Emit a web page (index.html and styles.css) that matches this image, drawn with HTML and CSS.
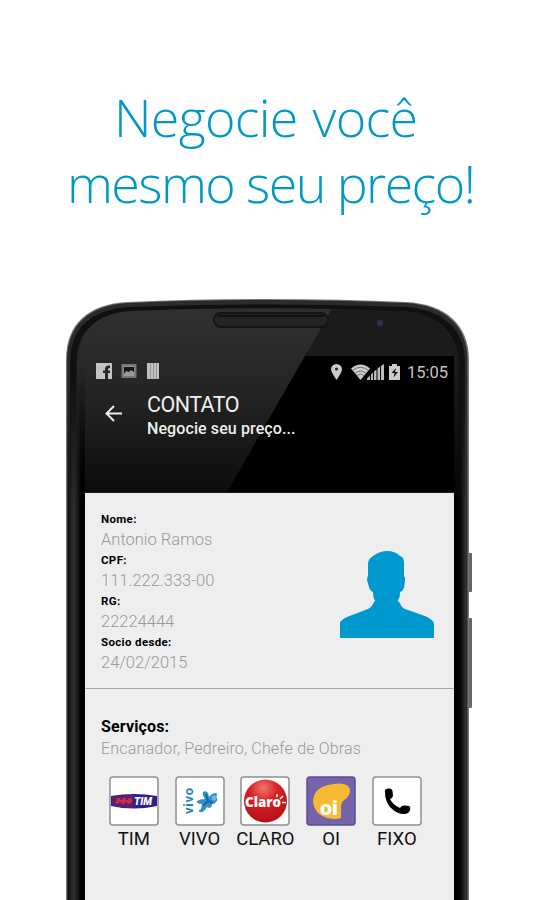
FILE: index.html
```
<!DOCTYPE html>
<html lang="pt-br">
<head>
    <meta charset="UTF-8">
    <meta name="viewport" content="width=device-width, initial-scale=1.0">
    <title>Contato</title>
    <link rel="stylesheet" href="styles.css">
</head>
<body>
    <!-- Chamada principal -->
    <h1 class="headline">
        <span class="line-one">Negocie você</span>
        <span class="line-two">mesmo seu preço!</span>
    </h1>

    <!-- Aparelho -->
    <div class="phone">
        <svg class="phone-frame" width="412" height="604" viewBox="0 0 412 604">
            <defs>
                <linearGradient id="glass" x1="0" y1="0" x2="0" y2="1">
                    <stop offset="0" stop-color="#303030"/>
                    <stop offset="0.5" stop-color="#232323"/>
                    <stop offset="1" stop-color="#0c0c0c"/>
                </linearGradient>
                <linearGradient id="edge" x1="0" y1="0" x2="1" y2="0">
                    <stop offset="0" stop-color="#101010"/>
                    <stop offset="0.35" stop-color="#303030"/>
                    <stop offset="0.6" stop-color="#151515"/>
                    <stop offset="0.75" stop-color="#000"/>
                    <stop offset="1" stop-color="#000"/>
                </linearGradient>
                <linearGradient id="edge-right" x1="0" y1="0" x2="1" y2="0">
                    <stop offset="0" stop-color="#000"/>
                    <stop offset="0.5" stop-color="#050505"/>
                    <stop offset="0.8" stop-color="#222"/>
                    <stop offset="1" stop-color="#333"/>
                </linearGradient>
                <linearGradient id="fade" x1="0" y1="70" x2="0" y2="210" gradientUnits="userSpaceOnUse">
                    <stop offset="0" stop-color="#000"/>
                    <stop offset="1" stop-color="#fff"/>
                </linearGradient>
                <mask id="fade-mask" maskUnits="userSpaceOnUse" x="0" y="0" width="412" height="604">
                    <rect width="412" height="604" fill="url(#fade)"/>
                </mask>
            </defs>
            <rect x="400" y="255" width="6" height="39" rx="1" fill="#666"/>
            <rect x="400" y="320" width="6" height="90" rx="1" fill="#666"/>
            <path d="M0 620V62C0 26 22 6 62 4Q130 1 202 1Q275 1 340 4C380 6 403 27 403 62V620Z" fill="#777"/>
            <path d="M1 620V62C1 27 23 7 62 5Q130 2 202 2Q275 2 340 5C379 7 401.500 28 401.500 62V620Z" fill="#2b2b2b"/>
            <path d="M4 620V64C4 30 26 11 63 9Q202 4 339 9C376 11 399 31 399 64V620Z" fill="#101010"/>
            <path d="M10 620V66C10 33 30 15 65 13Q202 7 337 13C370 15 393 34 393 66V620Z" fill="#1b1b1b"/>
            <path d="M11 194V66C11 33 31 15 66 13Q180 9 266 11L161 194Z" fill="url(#glass)"/>
            <g mask="url(#fade-mask)">
                <rect x="2" y="70" width="17" height="534" fill="url(#edge)"/>
                <rect x="388" y="70" width="12" height="534" fill="url(#edge-right)"/>
            </g>
            <path d="M239 58H388V194H161Z" fill="#000"/>
            <rect x="148" y="15" width="114" height="14" rx="7" fill="#242424" stroke="#151515" stroke-width="2"/>
            <path d="M152 18H258" stroke="#111" stroke-width="2"/>
            <circle cx="314" cy="25" r="5" fill="#1e1e22"/>
            <circle cx="314" cy="25" r="3" fill="#30304a"/>
        </svg>

        <div class="screen">
            <!-- Barra de status -->
            <div class="status-bar">
                <svg width="64" height="16" viewBox="0 0 64 16">
                    <path d="M0 0H16V16H12V10H14V7.500H12V6Q12 5 14 5V2.500Q9 2 9 6V7.500H7V10H9V16H0Z" fill="#c4c4c4"/>
                    <path d="M26.500 2H39.500V14H26.500Z" fill="#999" stroke="#777" stroke-width="2"/>
                    <path d="M28 4H38V9L35 7L33 9L30 8L28 11Z" fill="#151515"/>
                    <path d="M51 0H63V16H51Z" fill="#c0c0c0"/>
                    <path d="M54.500 0V16M57.500 0V16M60.500 0V16" stroke="#999"/>
                </svg>
                <div class="status-right">
                    <svg width="72" height="18" viewBox="0 0 72 18">
                        <path d="M6.500 17Q1 9 1 6.500A5.500 5.500 0 0 1 12 6.500Q12 9 6.500 17Z" fill="#ccc"/>
                        <circle cx="6.500" cy="6" r="1.500" fill="#222"/>
                        <path d="M21 5.500Q30.500 -2.500 40 5.500L30.500 17Z" fill="#ccc"/>
                        <path d="M22.500 7.500Q30.500 1 38.500 7.500M25 10.500Q30.500 5.500 36 10.500M27 13Q30.500 9.500 34 13" fill="none" stroke="#555" stroke-width="0.800"/>
                        <path d="M37 17V15.500L40 12.500V17ZM41 17V11.500L43 9.500V17ZM44 17V8.500L46.500 6.500V17ZM47.500 17V5.500L50 3.500V17ZM51 17V3L54 1V17Z" fill="#bbb"/>
                        <path d="M59 3H62V1H67V3H70V17H59Z" fill="#ccc"/>
                        <path d="M66 5L61.500 10H64.500L63.500 14.500L68 9H65Z" fill="#111"/>
                    </svg>
                    <span class="clock">15:05</span>
                </div>
            </div>

            <!-- Cabeçalho -->
            <div class="app-bar">
                <svg width="18" height="17" viewBox="0 0 18 17">
                    <path d="M17 8.500H2M9 1L1.500 8.500L9 16" fill="none" stroke="#eee" stroke-width="2"/>
                </svg>
                <div class="titles">
                    <div class="title">CONTATO</div>
                    <div class="subtitle">Negocie seu preço...</div>
                </div>
            </div>

            <!-- Dados do contato -->
            <div class="contact">
                <dl>
                    <dt>Nome:</dt><dd>Antonio Ramos</dd>
                    <dt>CPF:</dt><dd>111.222.333-00</dd>
                    <dt>RG:</dt><dd>22224444</dd>
                    <dt>Socio desde:</dt><dd>24/02/2015</dd>
                </dl>
                <svg class="avatar" width="94" height="88" viewBox="0 0 94 88">
                    <path d="M0 88V72Q2 69 7 67L28 59Q32 57 34 52Q36 51 34 49Q33 47 33 42Q30 41 29 37L27 30Q27 27 28 26V14Q28 9 33 6Q40 1 47 1Q55 1 60 6Q64 7 64 13V26Q66 28 65 31L64 38Q63 41 60 42Q60 48 58 50Q57 51 60 53Q61 57 65 59L85 66Q92 69 94 73V88Z" fill="#0099cf"/>
                </svg>
            </div>

            <!-- Serviços -->
            <div class="services">
                <h2>Serviços:</h2>
                <p>Encanador, Pedreiro, Chefe de Obras</p>
                <div class="carriers">
                    <div class="carrier">
                        <svg width="50" height="50" viewBox="0 0 50 50">
                            <rect class="tile" x="1" y="1" width="48" height="48" rx="3"/>
                            <path d="M2 20Q25 16 48 20V30Q25 35 2 30Z" fill="#30208b"/>
                            <path d="M3 21Q14 18 25 19L23 32Q12 32 3 29Z" fill="#5c2070"/>
                            <path d="M6 27L8.500 22H11.500L9.500 28ZM12 27.500L14 22H17L15.500 28ZM18 28L19.500 22H23L21.500 28ZM7 24H23V26H7Z" fill="#d42843"/>
                            <text x="25" y="29" class="tim-text" textLength="18" lengthAdjust="spacingAndGlyphs">TIM</text>
                        </svg>
                        <span>TIM</span>
                    </div>
                    <div class="carrier">
                        <svg width="50" height="50" viewBox="0 0 50 50">
                            <rect class="tile" x="1" y="1" width="48" height="48" rx="3"/>
                            <text transform="translate(18 38) rotate(-90)" class="vivo-text" textLength="26">vivo</text>
                            <path d="M28 16Q31 14 33 17L34 21Q37 17 41 17Q43 18 41 21Q44 23 41 26Q40 28 37 28Q37 32 34 32L32 31Q29 37 25 36Q22 35 26 33L27 28Q21 28 22 25Q25 23 30 23Q27 19 28 16Z" fill="#2f91c6"/>
                            <circle cx="39" cy="22" r="2.500" fill="#6fb9dc"/>
                            <path d="M31 18L33 25L28 30M33 25L38 27" stroke="#1469a3" stroke-width="2" fill="none"/>
                        </svg>
                        <span>VIVO</span>
                    </div>
                    <div class="carrier">
                        <svg width="50" height="50" viewBox="0 0 50 50">
                            <defs>
                                <radialGradient id="ball" cx="0.45" cy="0.2" r="0.8">
                                    <stop offset="0" stop-color="#ef7770"/>
                                    <stop offset="0.4" stop-color="#dc2026"/>
                                    <stop offset="1" stop-color="#b80e16"/>
                                </radialGradient>
                            </defs>
                            <rect class="tile" x="1" y="1" width="48" height="48" rx="3"/>
                            <circle cx="25.500" cy="25" r="21.500" fill="url(#ball)"/>
                            <text x="5" y="31" class="claro-text" textLength="36" lengthAdjust="spacingAndGlyphs">Claro</text>
                            <path d="M37 21V18M40 23L43 20M42 26.500H46" stroke="#fff" stroke-width="1.500"/>
                        </svg>
                        <span>CLARO</span>
                    </div>
                    <div class="carrier">
                        <svg width="50" height="50" viewBox="0 0 50 50">
                            <rect class="tile oi" x="1" y="1" width="48" height="48" rx="3"/>
                            <path d="M7 25Q8 12 22 9Q34 6 41 9Q47 14 41 22Q35 25 35 31V42Q30 44 21 42Q8 38 7 25Z" fill="#f6bb32"/>
                            <text x="14" y="39" class="oi-text" textLength="18" lengthAdjust="spacingAndGlyphs">oi</text>
                        </svg>
                        <span>OI</span>
                    </div>
                    <div class="carrier">
                        <svg width="50" height="50" viewBox="0 0 50 50">
                            <rect class="tile" x="1" y="1" width="48" height="48" rx="3"/>
                            <path d="M13 16Q12 13 16 12.500Q20 12 20.500 15L21 20Q20 23 18 23Q21 29 28 32Q29 29 33 29.500L37 30Q39 31 38 34Q37 38 32 38Q25 38 19 32Q13 26 13 16Z" fill="#000"/>
                        </svg>
                        <span>FIXO</span>
                    </div>
                </div>
            </div>
        </div>
    </div>
</body>
</html>
```
FILE: styles.css
```
* {
    margin: 0;
    padding: 0;
    box-sizing: border-box;
}

body {
    width: 536px;
    height: 900px;
    overflow: hidden;
    background: #fff;
    font-family: Roboto, "Liberation Sans", sans-serif;
}

svg {
    display: block;
    flex: none;
}

/* Chamada principal */
.headline {
    height: 298px;
    padding-top: 84px;
    font-family: "Open Sans", "Noto Sans", sans-serif;
    font-size: 52px;
    font-weight: 300;
    line-height: 66px;
    color: #0098c8;
    white-space: nowrap;
}

.headline span {
    display: block;
    width: max-content;
}

.line-one {
    margin-left: 114px;
    letter-spacing: -0.700px;
    word-spacing: 2px;
}

.line-two {
    margin-left: 67px;
    letter-spacing: -1.600px;
}

/* Aparelho */
.phone {
    position: relative;
    height: 602px;
    margin-left: 66px;
    overflow: hidden;
}

.phone-frame {
    position: absolute;
    top: 0;
    left: 0;
}

.screen {
    position: relative;
    width: 369px;
    margin-left: 19px;
    padding-top: 65px;
}

/* Barra de status */
.status-bar {
    display: flex;
    justify-content: space-between;
    height: 18px;
    padding: 0 6px 0 11px;
}

.status-right {
    display: flex;
    gap: 5px;
}

.clock {
    font-size: 16.500px;
    line-height: 19px;
    color: #c4c4c4;
}

/* Cabeçalho */
.app-bar {
    display: flex;
    height: 112px;
    padding: 24px 0 0 20px;
    color: #eee;
}

.titles {
    margin: -14px 0 0 24px;
}

.title {
    font-size: 21.500px;
    line-height: 27px;
    letter-spacing: -0.550px;
}

.subtitle {
    font-size: 16px;
    font-weight: 500;
    line-height: 22px;
    letter-spacing: 0.100px;
}

/* Dados do contato */
.contact {
    display: flex;
    justify-content: space-between;
    height: 196px;
    padding: 15px 20px 0 16px;
    background: #eee;
    border-bottom: 1px solid #aaa;
}

dt {
    font-size: 11.500px;
    font-weight: 700;
    line-height: 22px;
    letter-spacing: 0.350px;
    color: #000;
}

dd {
    font-size: 16.500px;
    font-weight: 300;
    line-height: 19px;
    color: #999;
}

.avatar {
    margin-top: 42px;
}

/* Serviços */
.services {
    height: 220px;
    padding: 27px 16px 0;
    background: #eee;
}

.services h2 {
    font-size: 16px;
    font-weight: 700;
    line-height: 22px;
    letter-spacing: 0.150px;
}

.services p {
    font-size: 16px;
    font-weight: 300;
    line-height: 22px;
    letter-spacing: 0.180px;
    color: #999;
}

.carriers {
    display: flex;
    margin-top: 16px;
}

.carrier {
    display: flex;
    flex-direction: column;
    align-items: center;
    width: 65.750px;
}

.carrier span {
    font-size: 18.500px;
    line-height: 27px;
    color: #111;
}

.tile {
    fill: #fff;
    stroke: #909090;
    stroke-width: 1.5px;
}

.tile.oi {
    fill: #7563ab;
    stroke: #5b4d93;
}

/* Logos das operadoras */
.tim-text {
    font-size: 10px;
    font-weight: 900;
    font-style: italic;
    fill: #fff;
}

.vivo-text {
    font-size: 13px;
    font-weight: 700;
    fill: #2386b8;
}

.claro-text {
    font-family: "Open Sans", sans-serif;
    font-size: 14px;
    font-weight: 800;
    fill: #fff;
}

.oi-text {
    font-size: 20px;
    font-weight: 900;
    fill: #fff;
}
```
